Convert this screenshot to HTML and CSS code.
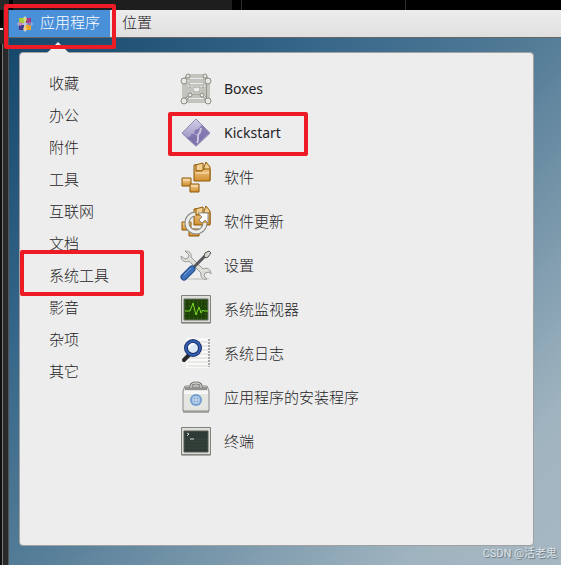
FILE: index.html
```html
<!DOCTYPE html>
<html lang="zh-CN">

<head>
    <meta charset="UTF-8">
    <meta name="viewport" content="width=device-width, initial-scale=1.0">
    <title>应用程序</title>
    <link rel="stylesheet" href="styles.css">
</head>

<body>
    <div class="viewer-top"></div>
    <div class="viewer-left"></div>
    <div class="desktop">
        <header class="panel">
            <button type="button" class="panel-button active marked">
                <svg width="16" height="16" viewBox="0 0 16 16">
                    <path d="M8 0l2 2h4v4l2 2-2 2v4h-4l-2 2-2-2H2v-4L0 8l2-2V2h4z" fill="#b9c6dc"/>
                    <path d="M2 2h5v5H2z" fill="#a5cd39"/>
                    <path d="M9 2h5v5H9z" fill="#a8388a"/>
                    <path d="M2 9h5v5H2z" fill="#433c8c"/>
                    <path d="M9 9h5v5H9z" fill="#efa724"/>
                    <path d="M8 1l2 2-2 4-2-4z" fill="#d3df7a"/>
                    <path d="M15 8l-2 2-4-2 4-2z" fill="#8a7fbb"/>
                    <path d="M8 15l-2-2 2-4 2 4z" fill="#f0d08c"/>
                    <path d="M1 8l2-2 4 2-4 2z" fill="#cf87b8"/>
                </svg>
                应用程序
            </button>
            <button type="button" class="panel-button">位置</button>
        </header>

        <main class="menu">
            <nav class="categories">
                <a href="#">收藏</a>
                <a href="#">办公</a>
                <a href="#">附件</a>
                <a href="#">工具</a>
                <a href="#">互联网</a>
                <a href="#">文档</a>
                <a href="#" class="marked">系统工具</a>
                <a href="#">影音</a>
                <a href="#">杂项</a>
                <a href="#">其它</a>
            </nav>

            <div class="apps">
                <a href="#">
                    <svg width="32" height="32" viewBox="0 0 32 32" fill="none">
                        <g stroke="#96968f" stroke-width="3">
                            <path d="M4 8h24v20H4zM8 3h17v20H8zM4 8l4-5M28 8l-3-5M4 28l6-6M28 28l-5-6"/>
                            <path d="M12 13h9v7h-9zM8 13h4M21 13h4"/>
                        </g>
                        <g stroke="#f3f3ee" stroke-width="1">
                            <path d="M4 8h24v20H4zM8 3h17v20H8zM4 8l4-5M28 8l-3-5M4 28l6-6M28 28l-5-6"/>
                            <path d="M12 13h9v7h-9zM8 13h4M21 13h4"/>
                        </g>
                        <g fill="#e9e9e4" stroke="#8b8b84">
                            <circle cx="8" cy="3" r="2"/>
                            <circle cx="25" cy="3" r="2"/>
                            <circle cx="4" cy="8" r="3"/>
                            <circle cx="28" cy="8" r="3"/>
                            <circle cx="4" cy="28" r="3"/>
                            <circle cx="28" cy="28" r="3"/>
                            <circle cx="10" cy="22" r="2"/>
                            <circle cx="22" cy="22" r="2"/>
                        </g>
                    </svg>
                    <span lang="en">Boxes</span>
                </a>
                <a href="#" class="marked">
                    <svg width="32" height="32" viewBox="0 0 32 32">
                        <defs>
                            <linearGradient id="gem" x1="0" y1="0" x2="0" y2="1">
                                <stop offset="0" stop-color="#d3d0e8"/>
                                <stop offset="1" stop-color="#8c80b8"/>
                            </linearGradient>
                        </defs>
                        <path d="M16 3l14 14-14 13L2 17z" fill="#c4c2cc"/>
                        <path d="M16 2l14 14-14 13L2 16z" fill="url(#gem)" stroke="#9189b4"/>
                        <path d="M22 8l7 8-13 12-9-7 4-2v-2h3l1-4 3-1z" fill="#7464a2" opacity=".7"/>
                        <path d="M21 11l-1 4-2 3v5l-1 3" fill="none" stroke="#cbc5e0" stroke-width="2"/>
                        <path d="M18 19l-3-2" stroke="#b8b0d4"/>
                    </svg>
                    <span lang="en">Kickstart</span>
                </a>
                <a href="#">
                    <svg width="32" height="32" viewBox="0 0 32 32" stroke="#8f5902">
                        <defs>
                            <linearGradient id="carton" x1="0" y1="0" x2="0" y2="1">
                                <stop offset="0" stop-color="#f5d49a"/>
                                <stop offset="1" stop-color="#d18f31"/>
                            </linearGradient>
                        </defs>
                        <path d="M15 4l8-2v8h-8zM24 6l2-5 4 5v13l-6-2z" fill="#f3cf91"/>
                        <path d="M14 4h2v6h6l2-2h6v12H14z" fill="url(#carton)"/>
                        <path d="M2 17h9v8H2z" fill="url(#carton)"/>
                        <path d="M10 23h9v8h-9z" fill="url(#carton)"/>
                        <path d="M3 19h7M11 25h7M16 12h13" stroke="#fae6c1"/>
                    </svg>
                    软件
                </a>
                <a href="#">
                    <svg width="32" height="32" viewBox="0 0 32 32" fill="none">
                        <g stroke="#8f5902">
                            <path d="M15 4l8-2v8h-8zM24 6l2-5 4 5v13l-6-2z" fill="#f3cf91"/>
                            <path d="M14 4h2v6h6l2-2h6v12H14z" fill="url(#carton)"/>
                            <path d="M2 17h9v8H2z" fill="url(#carton)"/>
                            <path d="M9 24h10v7H9z" fill="url(#carton)"/>
                        </g>
                        <path d="M15 9a9 9 0 1 0 10 9" stroke="#85857f" stroke-width="5"/>
                        <path d="M15 9a9 9 0 1 0 10 9" stroke="#eeeeec" stroke-width="3"/>
                        <path d="M18 8h10v10l-3-3-3 3-3-3 3-3z" fill="#fff" stroke="#8d8d87"/>
                    </svg>
                    软件更新
                </a>
                <a href="#">
                    <svg width="32" height="32" viewBox="0 0 32 32" fill="none">
                        <ellipse cx="18" cy="30" rx="12" ry="1" fill="#d2d2d0"/>
                        <path d="M5 2l4 4-1 3-3 1-4-3c0 5 4 7 8 5l12 12c-1 5 3 7 6 6l-3-3 1-3 4-1 2 2c0-5-4-7-8-5L11 8c1-4-2-6-6-6z" fill="#deded9" stroke="#999b96"/>
                        <path d="M14 18L26 6" stroke="#55575a" stroke-width="3"/>
                        <path d="M25 4l4-2 2 2-3 4-2 1-2-2z" fill="#d3d7cf" stroke="#555753"/>
                        <path d="M4 28l8-8" stroke="#204a87" stroke-width="7" stroke-linecap="round"/>
                        <path d="M4 28l8-8" stroke="#3f74bb" stroke-width="5" stroke-linecap="round"/>
                        <path d="M4 26l7-7" stroke="#79a4d9"/>
                    </svg>
                    设置
                </a>
                <a href="#">
                    <svg width="32" height="32" viewBox="0 0 32 32" fill="none">
                        <rect x="1" y="3" width="30" height="28" rx="1" fill="#adadab"/>
                        <rect x="1" y="2" width="30" height="28" rx="1" fill="#80827d"/>
                        <path d="M2 3h28v26H2z" fill="#deded9"/>
                        <path d="M4 6h24v21H4z" fill="#1f4207" stroke="#6c6e69"/>
                        <path d="M5 9h23M5 13h23M5 17h23M5 21h23M5 25h23" stroke="#40741c" stroke-dasharray="1 3"/>
                        <path d="M5 18h5l3-8 3 12 3-8 2 6 2-3 1 1h4" stroke="#7bdd2b"/>
                    </svg>
                    系统监视器
                </a>
                <a href="#">
                    <svg width="32" height="32" viewBox="0 0 32 32" fill="none">
                        <path d="M6 1h24v30H6z" fill="#f9f9f8"/>
                        <path d="M8 5h20M8 9h20M8 13h20M8 17h20M8 21h20M8 25h20M8 29h20" stroke="#d7d7d5"/>
                        <path d="M29 2v28" stroke="#555" stroke-width="1" stroke-dasharray="2 1"/>
                        <path d="M9 18l-5 5" stroke="#282828" stroke-width="4" stroke-linecap="round"/>
                        <circle cx="13" cy="11" r="7" fill="#dce8f5" stroke="#172e67" stroke-width="4"/>
                        <circle cx="13" cy="11" r="7" stroke="#355eb2" stroke-width="2"/>
                        <path d="M9 11c0-3 3-4 5-4" stroke="#fff" stroke-width="2"/>
                    </svg>
                    系统日志
                </a>
                <a href="#">
                    <svg width="32" height="32" viewBox="0 0 32 32" fill="none">
                        <path d="M3 31h26" stroke="#aaa" stroke-width="2"/>
                        <path d="M5 5h22l2 5v20H3V10z" fill="#e5e6e2" stroke="#888a85"/>
                        <path d="M5 6h22v3H5z" fill="#90928e"/>
                        <path d="M4 10h24v3H4z" fill="#f7f7f5"/>
                        <path d="M11 7V5c0-4 10-4 10 0v2" stroke="#777974" stroke-width="3"/>
                        <path d="M11 7V5c0-4 10-4 10 0v2" stroke="#ecece8"/>
                        <circle cx="16" cy="19" r="6" fill="#729fcf"/>
                        <rect x="13" y="16" width="6" height="6" rx="1" stroke="#dce8f4"/>
                        <path d="M16 16v6M13 19h6" stroke="#dce8f4"/>
                    </svg>
                    应用程序的安装程序
                </a>
                <a href="#">
                    <svg width="32" height="32" viewBox="0 0 32 32" fill="none">
                        <rect x="1" y="3" width="30" height="28" rx="1" fill="#adadab"/>
                        <rect x="1" y="2" width="30" height="28" rx="1" fill="#80827d"/>
                        <path d="M2 3h28v26H2z" fill="#deded9"/>
                        <path d="M4 6h24v21H4z" fill="#2d3a36" stroke="#565855"/>
                        <path d="M5 14h22M5 17h22M5 20h22M5 23h22" stroke="#39463f"/>
                        <path d="M7 8l2 1-2 2M10 14h4" stroke="#d4d8d3"/>
                    </svg>
                    终端
                </a>
            </div>
        </main>

        <footer class="credit">CSDN @活老鬼</footer>
    </div>
</body>

</html>
```
FILE: styles.css
```css
* {
    box-sizing: border-box;
}

body {
    margin: 0;
    min-height: 100vh;
    display: grid;
    grid-template-columns: 9px 1fr;
    grid-template-rows: 10px 1fr;
    font-family: "Noto Sans", "Noto Sans CJK SC", sans-serif;
    font-size: 15px;
    font-weight: 300;
    color: #1e2426;
}

a {
    color: inherit;
    text-decoration: none;
}

.viewer-top {
    grid-column: 1 / 3;
    background: linear-gradient(90deg, #292929 9px, #000 9px, #000 13px, #1e1e1e 13px, #1e1e1e 232px, #000 232px, #000 241px, #303030 241px, #303030 242px, #000 242px, #000 405px, #303030 405px, #303030 406px, #000 406px);
}

.viewer-left {
    background:
        linear-gradient(#000 18px, #ddd 18px, #ddd 20px, #292929 20px, #292929 34px, transparent 34px) 0 0 / 3px 100% no-repeat,
        linear-gradient(90deg, #111 2px, #75797c 2px, #75797c 3px, #292929 3px, #292929 8px, #555 8px);
}

.desktop {
    display: flex;
    flex-direction: column;
    background: linear-gradient(135deg, #134568 0%, #336488 28%, #527b96 50%, #a0b4c0 86%, #a6b7c2 100%);
}

.panel {
    display: flex;
    height: 28px;
    background: linear-gradient(#ededed, #dfdfdf);
    border-bottom: 1px solid #666;
}

.panel-button {
    display: flex;
    align-items: center;
    gap: 7px;
    padding: 0 12px 3px;
    border: 0;
    background: none;
    font: inherit;
    line-height: 24px;
    color: inherit;
}

.panel-button.active {
    padding: 0 10px 3px 8px;
    background: #4a90d9;
    color: #fff;
}

.panel-button svg {
    margin-top: 3px;
}

.menu {
    position: relative;
    display: flex;
    flex: 1;
    margin: 14px 27px 0 10px;
    padding: 14px 0;
    background: #ededed;
    border: 1px solid #a1a1a1;
    border-radius: 4px;
}

/* pointer towards the panel button */
.menu::before {
    content: "";
    position: absolute;
    top: -11px;
    left: 27px;
    border: 11px solid transparent;
    border-top: 0;
    border-bottom-color: #ededed;
}

.categories {
    display: flex;
    flex-direction: column;
    width: 160px;
}

.categories a {
    padding-left: 29px;
    line-height: 32px;
}

.apps {
    display: flex;
    flex-direction: column;
    align-items: flex-start;
    padding-top: 1px;
}

.apps a {
    display: flex;
    align-items: center;
    gap: 12px;
    height: 44px;
    line-height: 20px;
    padding-bottom: 2px;
}

.apps [lang="en"] {
    font-size: 14px;
    font-weight: 400;
    line-height: 22px;
}

.marked {
    position: relative;
}

/* red marker frame */
.marked::after {
    content: "";
    position: absolute;
    z-index: 1;
    border: 4px solid #ed1c24;
    border-radius: 2px;
}

.panel-button.marked::after {
    inset: -6px -6px -12px -5px;
}

.categories .marked::after {
    inset: -9px 36px -5px 0;
}

.apps .marked::after {
    inset: 0 -27px 0 -12px;
}

.credit {
    height: 19px;
    padding-right: 4px;
    font-family: Roboto, "Noto Sans CJK SC", sans-serif;
    font-size: 11px;
    font-weight: 400;
    line-height: 16px;
    text-align: right;
    color: #dde3e7;
    text-shadow: 1px 1px 1px #65747e;
}
```
